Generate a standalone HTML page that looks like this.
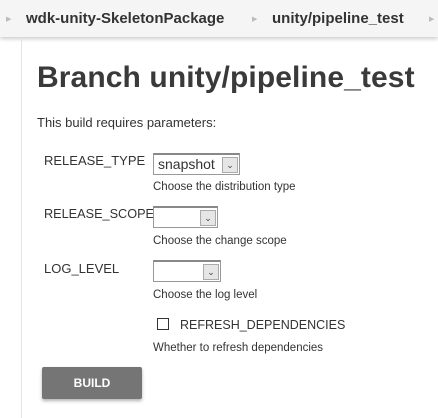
<!DOCTYPE html><html><head><style>
body{margin:0;width:438px;height:418px;overflow:hidden;background:#fff;font-family:"Liberation Sans",sans-serif;color:#333;position:relative}
.hdr{position:absolute;left:0;top:0;width:438px;height:37px;background:#f5f5f5;box-shadow:0 2px 4px rgba(0,0,0,.2)}
.a{position:absolute;font-size:7px;color:#bbb;top:15px}
.crumb{position:absolute;top:10px;font-weight:bold;font-size:15px;color:#333}
.vl{position:absolute;left:21px;top:37px;width:1px;height:381px;background:#e4e4e4}
.t{position:absolute;white-space:nowrap}
.lab{font-size:13px;color:#333}
.d{font-size:11.5px;color:#333}
.sel{position:absolute;height:20px;border:1px solid #999;border-top:2px solid #888;background:#fff;box-sizing:border-box}
.sel span{position:absolute;right:1px;top:1px;width:16px;height:16px;background:#e6e6e6;border:1px solid #aaa;box-sizing:border-box;font-size:9px;text-align:center;line-height:14px;color:#444}
</style></head><body>
<div class="hdr">
<div class="a" style="left:6px">▶</div>
<div class="crumb" style="left:26px">wdk-unity-SkeletonPackage</div>
<div class="a" style="left:252px">▶</div>
<div class="crumb" style="left:272px">unity/pipeline_test</div>
<div class="a" style="left:429px">▶</div>
</div>
<div class="vl"></div>
<div class="t" style="left:37px;top:61px;font-size:30px;font-weight:bold;color:#3a3a3a;letter-spacing:0.1px">Branch unity/pipeline_test</div>
<div class="t lab" style="left:37px;top:115px">This build requires parameters:</div>
<div class="t lab" style="left:44px;top:153px">RELEASE_TYPE</div>
<div class="sel" style="left:153px;top:153px;width:87px;height:22px"><div class="t" style="left:4px;top:1px;font-size:14px">snapshot</div><span style="top:2px">⌄</span></div>
<div class="t d" style="left:153px;top:181px">Choose the distribution type</div>
<div class="t" style="left:44px;top:207px;font-size:12.7px">RELEASE_SCOPE</div>
<div class="sel" style="left:153px;top:206px;width:65px;height:22px"><span style="top:2px">⌄</span></div>
<div class="t d" style="left:153px;top:235px">Choose the change scope</div>
<div class="t lab" style="left:44px;top:261px">LOG_LEVEL</div>
<div class="sel" style="left:153px;top:260px;width:68px;height:22px"><span style="top:2px">⌄</span></div>
<div class="t d" style="left:153px;top:289px">Choose the log level</div>
<div style="position:absolute;left:157px;top:318px;width:12px;height:12px;border:1px solid #333;box-sizing:border-box"></div>
<div class="t" style="left:180px;top:318px;font-size:12.5px">REFRESH_DEPENDENCIES</div>
<div class="t d" style="left:153px;top:342px">Whether to refresh dependencies</div>
<div style="position:absolute;left:42px;top:367px;width:100px;height:32px;background:#757575;border-radius:2px;box-shadow:0 2px 3px rgba(0,0,0,.3);color:#fff;font-weight:bold;font-size:12px;text-align:center;line-height:32px">BUILD</div>
</body></html>
